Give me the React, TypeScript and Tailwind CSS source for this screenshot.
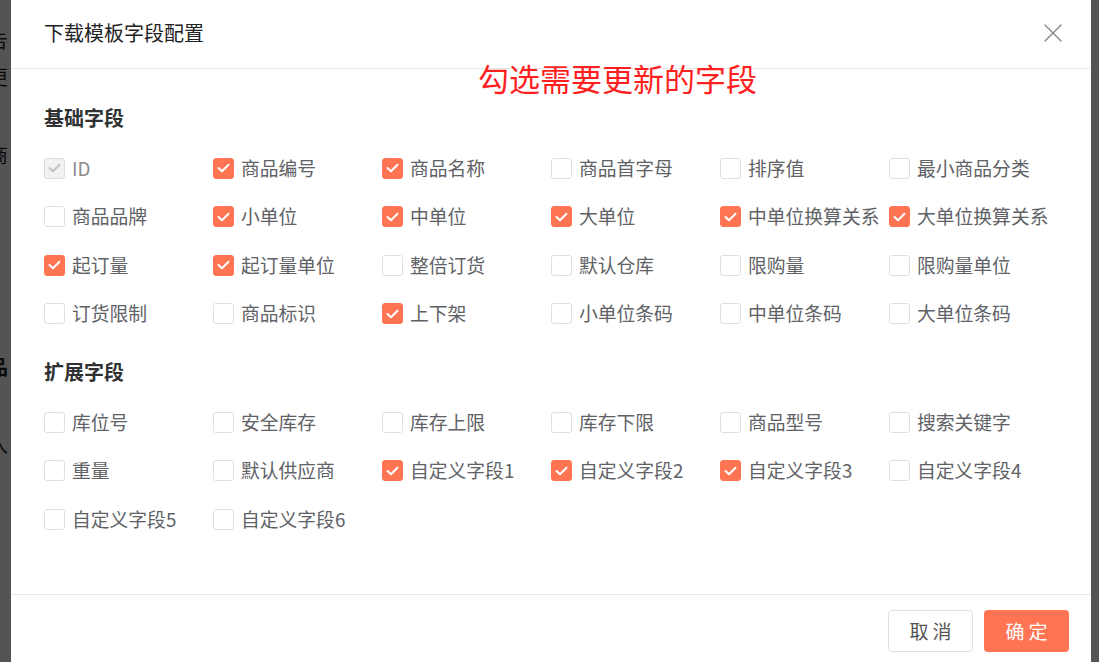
import { X } from 'lucide-react'

type Field = { label: string; checked?: boolean; disabled?: boolean }

const basic: Field[] = [
  { label: 'ID', checked: true, disabled: true },
  { label: '商品编号', checked: true },
  { label: '商品名称', checked: true },
  { label: '商品首字母' },
  { label: '排序值' },
  { label: '最小商品分类' },
  { label: '商品品牌' },
  { label: '小单位', checked: true },
  { label: '中单位', checked: true },
  { label: '大单位', checked: true },
  { label: '中单位换算关系', checked: true },
  { label: '大单位换算关系', checked: true },
  { label: '起订量', checked: true },
  { label: '起订量单位', checked: true },
  { label: '整倍订货' },
  { label: '默认仓库' },
  { label: '限购量' },
  { label: '限购量单位' },
  { label: '订货限制' },
  { label: '商品标识' },
  { label: '上下架', checked: true },
  { label: '小单位条码' },
  { label: '中单位条码' },
  { label: '大单位条码' },
]

const extended: Field[] = [
  { label: '库位号' },
  { label: '安全库存' },
  { label: '库存上限' },
  { label: '库存下限' },
  { label: '商品型号' },
  { label: '搜索关键字' },
  { label: '重量' },
  { label: '默认供应商' },
  { label: '自定义字段1', checked: true },
  { label: '自定义字段2', checked: true },
  { label: '自定义字段3', checked: true },
  { label: '自定义字段4' },
  { label: '自定义字段5' },
  { label: '自定义字段6' },
]

function Check({ field }: { field: Field }) {
  const box = field.disabled
    ? 'bg-[#f2f2f2] border-[#dcdcdc]'
    : field.checked
      ? 'bg-[#ff7554] border-[#ff7554]'
      : 'bg-white border-[#dcdfe6]'
  return (
    <label className="flex items-center h-[48.5px] gap-[7px] whitespace-nowrap">
      <span className={`w-[21px] h-[21px] rounded-[3px] border flex items-center justify-center shrink-0 ${box}`}>
        {field.checked && (
          <svg width="13" height="10" viewBox="0 0 13 10" fill="none">
            <path
              d="M1.5 5 L5 8.3 L11.5 1.7"
              stroke={field.disabled ? '#c2c2c2' : '#ffffff'}
              strokeWidth="2"
              strokeLinecap="round"
              strokeLinejoin="round"
            />
          </svg>
        )}
      </span>
      <span className={`text-[18.8px] leading-none ${field.disabled ? 'text-[#8c8c8c]' : 'text-[#606266]'}`}>
        {field.label}
      </span>
    </label>
  )
}

function Section({ title, fields, className }: { title: string; fields: Field[]; className: string }) {
  return (
    <div className={className}>
      <h3 className="text-[20px] leading-[28px] font-bold text-[#303133] mb-[12px]">{title}</h3>
      <div className="grid grid-cols-[repeat(6,169px)]">
        {fields.map(f => (
          <Check key={f.label} field={f} />
        ))}
      </div>
    </div>
  )
}

export default function App() {
  return (
    <div
      className="relative h-screen w-full overflow-hidden bg-white"
      style={{ fontFamily: '"Microsoft YaHei", "Noto Sans CJK SC", "Noto Sans", sans-serif' }}
    >
      {/* page behind the dialog */}
      <div className="-ml-[12px] pt-[30px] text-[20px] text-[#222] leading-none flex flex-col">
        <span className="h-[37px]">告</span>
        <span className="h-[78px]">更</span>
        <span className="h-[212px]">商</span>
        <span className="h-[78px] font-bold">品</span>
        <span>入</span>
      </div>

      {/* overlay */}
      <div className="absolute inset-0 bg-black/[0.67]" />

      {/* dialog */}
      <div className="absolute left-[11px] top-0 w-[1080px] h-[700px] bg-white flex flex-col">
        <div className="h-[69px] border-b border-[#e8e8e8] flex items-center justify-between pl-[33px] pr-[22px] shrink-0">
          <h2 className="text-[20px] text-[#222] mt-[-2px]">下载模板字段配置</h2>
          <X size={32} strokeWidth={1} className="text-[#8a8a8a] -mt-[2px]" />
        </div>

        <div className="absolute left-[467px] top-[60px] text-[31px] leading-[35px] text-[#ff1f1f]">
          勾选需要更新的字段
        </div>

        <div className="h-[525px] pl-[33px] pt-[35px]">
          <Section title="基础字段" fields={basic} className="" />
          <Section title="扩展字段" fields={extended} className="mt-[20px]" />
        </div>

        <div className="border-t border-[#e8e8e8] flex justify-end gap-[11px] pt-[15px] pr-[22px]">
          <button className="w-[85px] h-[42px] rounded-[4px] border border-[#dcdfe6] bg-white text-[19px] tracking-[4px] pl-[4px] text-[#555]">
            取消
          </button>
          <button className="w-[85px] h-[42px] rounded-[4px] bg-[#ff7554] text-[19px] tracking-[4px] pl-[4px] text-white">
            确定
          </button>
        </div>
      </div>
    </div>
  )
}
